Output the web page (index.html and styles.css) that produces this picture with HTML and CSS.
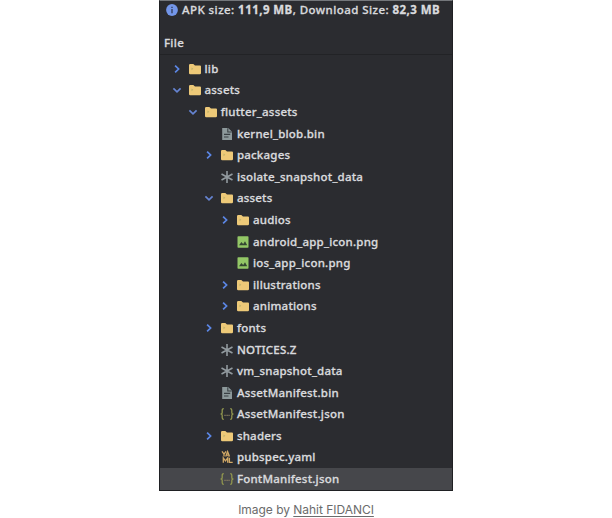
FILE: index.html
```
<!DOCTYPE html>
<html lang="en">
<head>
<meta charset="utf-8">
<title>APK Analyzer</title>
<link rel="stylesheet" href="styles.css">
</head>
<body>
<svg width="0" height="0" class="defs" aria-hidden="true">
  <symbol id="folder" viewBox="0 0 14 14"><path d="M1 3.2Q1 2 2.2 2H5.3L7 3.4H12Q13 3.4 13 4.4V11Q13 12.2 11.8 12.2H2.2Q1 12.2 1 11Z" fill="#edc978"/><path d="M3.5 5.5V8.3L5.3 6.8Z" fill="#bdb36b"/></symbol>
  <symbol id="right" viewBox="0 0 10 10"><path d="M3.1 1.6L6.6 5L3.1 8.4" fill="none" stroke="#5c87e6" stroke-width="1.7"/></symbol>
  <symbol id="down" viewBox="0 0 10 10"><path d="M1.4 3.3L5 6.8L8.6 3.3" fill="none" stroke="#6684d2" stroke-width="1.7"/></symbol>
  <symbol id="doc" viewBox="0 0 14 14"><path d="M2.2 1H8.2L12 4.7V13H2.2Z" fill="#8d999b"/><path d="M7.8 1.2V5H11.8M4 7.4H10.2M4 10H8.5" fill="none" stroke="#3a4044" stroke-width="1.1"/></symbol>
  <symbol id="star" viewBox="0 0 14 14"><path d="M7 1V13M1.5 4L12.5 10M1.5 10L12.5 4" fill="none" stroke="#929a9f" stroke-width="1.6"/></symbol>
  <symbol id="image" viewBox="0 0 14 14"><rect x="1.5" y="1.3" width="11" height="11.4" rx=".8" fill="#93c766"/><path d="M3 10.2L5.4 7L7.2 9L9 6.2L11.2 10.2Z" fill="#344832"/></symbol>
  <symbol id="json" viewBox="0 0 14 14"><path d="M3.8 1.6Q2.2 1.6 2.2 3.2V5.4Q2.2 7 .6 7Q2.2 7 2.2 8.6V10.8Q2.2 12.4 3.8 12.4M10.2 1.6Q11.8 1.6 11.8 3.2V5.4Q11.8 7 13.4 7Q11.8 7 11.8 8.6V10.8Q11.8 12.4 10.2 12.4" fill="none" stroke="#90964e" stroke-width="1.3"/><path d="M4.4 8.3H5.6M6.5 8.3H7.7M8.5 8.3H9.6" stroke="#8e8364" stroke-width="1.2"/></symbol>
  <symbol id="yaml" viewBox="0 0 14 14"><path d="M2 1.3L4 4.2L6 1.3M4 4.2V6.6M5.7 6.6L7.6 1.6L9.5 6.6M6.4 5.2H8.8M3.3 12.7V7.9L5.5 10.8L7.7 7.9V12.7M9.4 7.8V12.3H12.7" fill="none" stroke="#d2a966" stroke-width="1.3"/></symbol>
</svg>
<main class="panel">
  <header class="summary">
    <svg class="info" viewBox="0 0 12 12"><circle cx="6" cy="6" r="5.9" fill="#7396e9"/><path d="M6 5V9.2M6 2.7V4" stroke="#35415f" stroke-width="1.4"/></svg>
    <p>APK size: <b>111,9 MB</b>, Download Size: <b>82,3 MB</b></p>
  </header>
  <div class="column">File</div>
  <ul class="tree">
    <li class="d0"><svg class="arrow"><use href="#right"/></svg><svg class="icon"><use href="#folder"/></svg><span>lib</span></li>
    <li class="d0"><svg class="arrow"><use href="#down"/></svg><svg class="icon"><use href="#folder"/></svg><span>assets</span></li>
    <li class="d1"><svg class="arrow"><use href="#down"/></svg><svg class="icon"><use href="#folder"/></svg><span>flutter_assets</span></li>
    <li class="d2"><i class="arrow"></i><svg class="icon"><use href="#doc"/></svg><span>kernel_blob.bin</span></li>
    <li class="d2"><svg class="arrow"><use href="#right"/></svg><svg class="icon"><use href="#folder"/></svg><span>packages</span></li>
    <li class="d2"><i class="arrow"></i><svg class="icon"><use href="#star"/></svg><span>isolate_snapshot_data</span></li>
    <li class="d2"><svg class="arrow"><use href="#down"/></svg><svg class="icon"><use href="#folder"/></svg><span>assets</span></li>
    <li class="d3"><svg class="arrow"><use href="#right"/></svg><svg class="icon"><use href="#folder"/></svg><span>audios</span></li>
    <li class="d3"><i class="arrow"></i><svg class="icon"><use href="#image"/></svg><span>android_app_icon.png</span></li>
    <li class="d3"><i class="arrow"></i><svg class="icon"><use href="#image"/></svg><span>ios_app_icon.png</span></li>
    <li class="d3"><svg class="arrow"><use href="#right"/></svg><svg class="icon"><use href="#folder"/></svg><span>illustrations</span></li>
    <li class="d3"><svg class="arrow"><use href="#right"/></svg><svg class="icon"><use href="#folder"/></svg><span>animations</span></li>
    <li class="d2"><svg class="arrow"><use href="#right"/></svg><svg class="icon"><use href="#folder"/></svg><span>fonts</span></li>
    <li class="d2"><i class="arrow"></i><svg class="icon"><use href="#star"/></svg><span>NOTICES.Z</span></li>
    <li class="d2"><i class="arrow"></i><svg class="icon"><use href="#star"/></svg><span>vm_snapshot_data</span></li>
    <li class="d2"><i class="arrow"></i><svg class="icon"><use href="#doc"/></svg><span>AssetManifest.bin</span></li>
    <li class="d2"><i class="arrow"></i><svg class="icon"><use href="#json"/></svg><span>AssetManifest.json</span></li>
    <li class="d2"><svg class="arrow"><use href="#right"/></svg><svg class="icon"><use href="#folder"/></svg><span>shaders</span></li>
    <li class="d2"><i class="arrow"></i><svg class="icon"><use href="#yaml"/></svg><span>pubspec.yaml</span></li>
    <li class="d2 selected"><i class="arrow"></i><svg class="icon"><use href="#json"/></svg><span>FontManifest.json</span></li>
  </ul>
</main>
<p class="caption">Image by <a>Nahit FIDANCI</a></p>
</body>
</html>
```
FILE: styles.css
```
* { box-sizing: border-box; }
body { margin: 0; background: #fff; overflow: hidden; }
p, ul { margin: 0; padding: 0; }
.defs { display: block; }
.panel {
  width: 294px;
  height: 491px;
  margin-left: 159px;
  background: #2b2c30;
  border: 1px solid #1f2023;
  border-top-color: #74777b;
  color: #d9dadd;
  font: 500 11.5px/16px "Noto Sans", sans-serif;
  -webkit-text-stroke: 0.3px #d9dadd;
  white-space: nowrap;
}
.panel svg { -webkit-text-stroke: 0; }
.summary { display: flex; align-items: center; height: 32px; padding: 0 0 15px 6px; gap: 4px; letter-spacing: 0.44px; }
.info { width: 12px; height: 12px; flex: none; }
.summary b { font-weight: 700; }
.column { height: 22px; padding: 2px 0 0 4px; border-bottom: 1px solid #222326; letter-spacing: 0.3px; }
.tree { list-style: none; padding-top: 3px; }
.tree li { display: flex; align-items: center; height: 21.6px; }
.tree span { letter-spacing: 0.21px; }
.arrow { width: 10px; height: 10px; flex: none; margin-right: 6px; }
.icon { width: 14px; height: 14px; flex: none; margin-right: 3px; }
.d0 { padding-left: 11.5px; }
.d1 { padding-left: 27.7px; }
.d2 { padding-left: 43.9px; }
.d3 { padding-left: 60px; }
.tree .selected { background: #46474b; }
.caption { margin-top: 10px; text-align: center; color: #6b6b6b; font: 12px/18px Inter, sans-serif; letter-spacing: -0.03px; }
.caption a { text-decoration: underline; text-underline-offset: 2px; }
```
